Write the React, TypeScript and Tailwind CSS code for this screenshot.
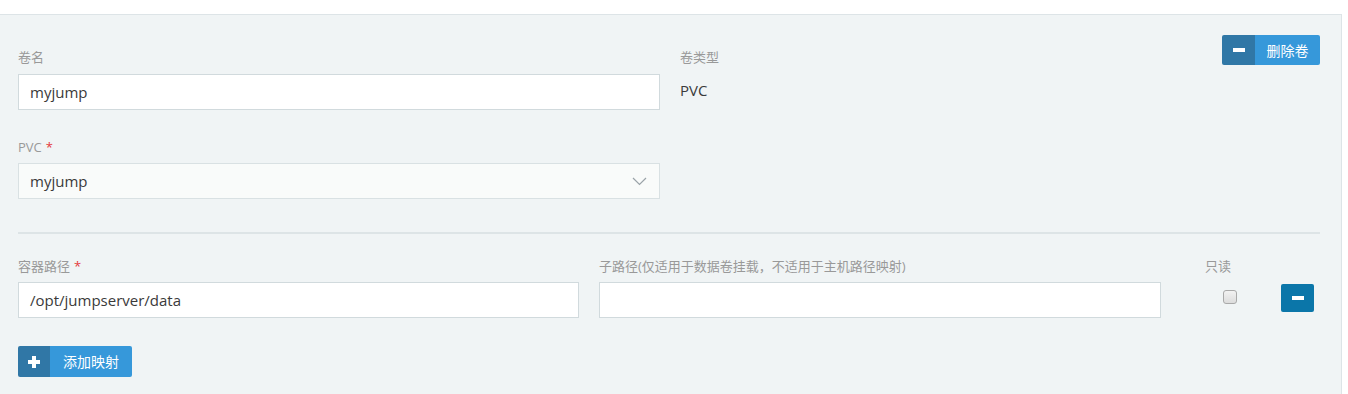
import React from "react";

const font = { fontFamily: '"Open Sans", "Noto Sans CJK SC", sans-serif' };

function Label({ children, required }: { children: React.ReactNode; required?: boolean }) {
  return (
    <div className="h-[20px] text-[13px] leading-[20px] text-[#999]">
      {children}
      {required && <span className="ml-[4px] text-[#e4393c]">*</span>}
    </div>
  );
}

function Input({ value, bg = "bg-white" }: { value?: string; bg?: string }) {
  return (
    <div className={`flex h-[36px] items-center border border-[#d1dadd] ${bg} pl-[11px] text-[15px] text-[#3a3a3a]`}>
      {value}
    </div>
  );
}

export default function App() {
  return (
    <div style={font} className="h-[394px] w-[1348px] bg-white pt-[14px]">
      <div className="h-[380px] w-[1342px] border-t border-r border-[#dde4e7] bg-[#f0f4f5] pl-[18px] pr-[21px]">
        {/* top section */}
        <div className="flex pt-[20px]">
          <div className="flex w-[642px] flex-col pt-[12px]">
            <Label>卷名</Label>
            <div className="mt-[7px]">
              <Input value="myjump" />
            </div>
            <div className="mt-[27px]">
              <Label required>PVC</Label>
            </div>
            <div className="mt-[6px]">
              <div className="flex h-[36px] items-center justify-between border border-[#d9e1e3] bg-[#f9fbfa] pl-[11px] pr-[12px] text-[15px] text-[#3a3a3a]">
                <span>myjump</span>
                <svg width="15" height="9" viewBox="0 0 15 9" fill="none">
                  <path d="M1 1 L7.5 7.5 L14 1" stroke="#9aa3a8" strokeWidth="1.2" />
                </svg>
              </div>
            </div>
          </div>
          <div className="ml-[20px] flex flex-1 flex-col pt-[12px]">
            <Label>卷类型</Label>
            <div className="mt-[12px] text-[15px] leading-[22px] text-[#3a3a3a]">PVC</div>
          </div>
          <div className="flex h-[30px] items-stretch rounded-[2px] text-[14px] text-white">
            <div className="flex w-[33px] items-center justify-center rounded-l-[2px] bg-[#3077a6]">
              <div className="h-[4px] w-[12px] bg-white" />
            </div>
            <div className="flex w-[65px] items-center justify-center rounded-r-[2px] bg-[#3698da]">
              删除卷
            </div>
          </div>
        </div>

        <div className="mt-[33px] h-[2px] bg-[#dde4e6]" />

        {/* mapping row */}
        <div className="mt-[22px] flex">
          <div className="w-[561px]">
            <Label required>容器路径</Label>
            <div className="mt-[6px]">
              <Input value="/opt/jumpserver/data" />
            </div>
          </div>
          <div className="ml-[20px] w-[562px]">
            <Label>子路径(仅适用于数据卷挂载，不适用于主机路径映射)</Label>
            <div className="mt-[6px]">
              <Input />
            </div>
          </div>
          <div className="ml-[44px] flex flex-col">
            <Label>只读</Label>
            <div className="ml-[18px] mt-[14px] h-[14px] w-[14px] rounded-[3px] border border-[#a9a9a9] bg-gradient-to-b from-[#f2f2f2] to-[#dcdcdc]" />
          </div>
          <div className="ml-[44px] mt-[28px] flex h-[28px] w-[33px] items-center justify-center rounded-[2px] bg-[#0b76a9]">
            <div className="h-[4px] w-[12px] bg-white" />
          </div>
        </div>

        <div className="mt-[28px] flex h-[31px] w-[114px] items-stretch text-[14px] text-white">
          <div className="flex w-[32px] items-center justify-center rounded-l-[2px] bg-[#3077a6]">
            <svg width="12" height="12" viewBox="0 0 12 12">
              <rect x="4" y="0" width="4" height="12" fill="white" />
              <rect x="0" y="4" width="12" height="4" fill="white" />
            </svg>
          </div>
          <div className="flex flex-1 items-center justify-center rounded-r-[2px] bg-[#3698da]">
            添加映射
          </div>
        </div>
      </div>
    </div>
  );
}
